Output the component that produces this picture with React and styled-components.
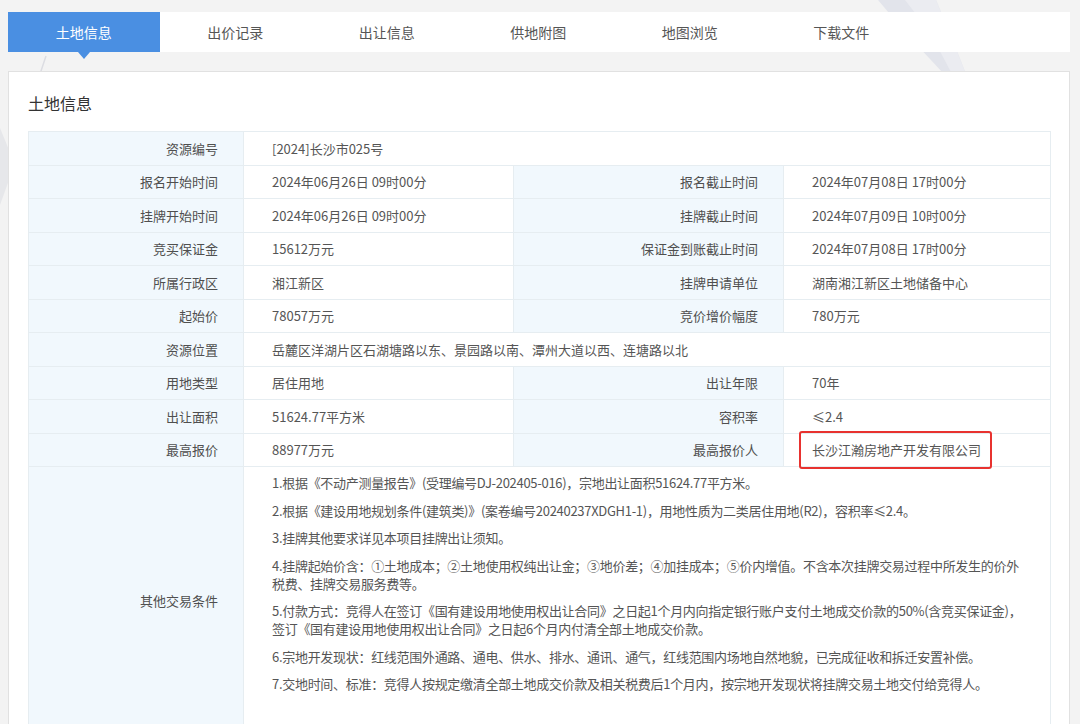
import React from 'react';
import styled, { createGlobalStyle } from 'styled-components';

const GlobalStyle = createGlobalStyle`
  html, body {
    margin: 0;
    background: #f3f3f3;
    font-family: "Noto Sans CJK SC", "Noto Sans", sans-serif;
    font-size: 13px;
    color: #555;
  }
  * { box-sizing: border-box; }
`;

const Page = styled.div`
  position: relative;
  min-height: 724px;
  padding: 12px 10px 0 8px;
  overflow: hidden;
`;

const Backdrop = styled.svg`
  position: absolute;
  left: 0;
  top: 0;
  width: 1080px;
  height: 724px;
  z-index: 0;
`;

const Content = styled.div`
  position: relative;
  z-index: 1;
`;

const TabBar = styled.div`
  display: flex;
  height: 40px;
  background: #fff;
`;

const Tab = styled.div`
  position: relative;
  width: 151.5px;
  display: flex;
  align-items: center;
  justify-content: center;
  font-size: 14px;
  color: ${(p) => (p.$active ? '#fff' : '#555')};
  background: ${(p) => (p.$active ? '#4a8fe2' : 'transparent')};
  cursor: pointer;

  ${(p) =>
    p.$active &&
    `
    &::after {
      content: '';
      position: absolute;
      left: 50%;
      bottom: -7px;
      margin-left: -6px;
      border-left: 6px solid transparent;
      border-right: 6px solid transparent;
      border-top: 7px solid #4a8fe2;
    }
  `}
`;

const Panel = styled.section`
  margin-top: 19px;
  background: #fff;
  border: 1px solid #e1e1e1;
  padding: 20px 19px 0 19px;
`;

const Title = styled.h2`
  margin: 0 0 17px;
  font-size: 16px;
  line-height: 22px;
  font-weight: normal;
  color: #333;
`;

const Table = styled.table`
  width: 1022px;
  table-layout: fixed;
  border-collapse: collapse;
`;

const Label = styled.th`
  height: 33.5px;
  padding: 0 25px 0 10px;
  text-align: right;
  font-weight: normal;
  color: #4f4f4f;
  background: #f1f8fd;
  border: 1px solid #e6edf1;
  white-space: nowrap;
`;

const Value = styled.td`
  height: 33.5px;
  padding: 0 10px 0 28px;
  text-align: left;
  color: #555;
  background: #fff;
  border: 1px solid #e6edf1;
  white-space: nowrap;
`;

const NotesCell = styled.td`
  padding: 7px 20px 32px 28px;
  text-align: left;
  vertical-align: top;
  color: #555;
  background: #fff;
  border: 1px solid #e6edf1;
  letter-spacing: -0.3px;
`;

const Note = styled.p`
  margin: 0 0 9.5px;
  line-height: 18px;
`;

const Marked = styled.span`
  position: relative;
  display: inline-block;
  line-height: 16px;

  &::after {
    content: '';
    position: absolute;
    top: -11px;
    bottom: -11px;
    left: -13px;
    right: -11px;
    border: 2px solid #e8322f;
    border-radius: 3px;
  }
`;

const tabs = ['土地信息', '出价记录', '出让信息', '供地附图', '地图浏览', '下载文件'];

const rows = [
  [['资源编号', '[2024]长沙市025号']],
  [['报名开始时间', '2024年06月26日 09时00分'], ['报名截止时间', '2024年07月08日 17时00分']],
  [['挂牌开始时间', '2024年06月26日 09时00分'], ['挂牌截止时间', '2024年07月09日 10时00分']],
  [['竞买保证金', '15612万元'], ['保证金到账截止时间', '2024年07月08日 17时00分']],
  [['所属行政区', '湘江新区'], ['挂牌申请单位', '湖南湘江新区土地储备中心']],
  [['起始价', '78057万元'], ['竞价增价幅度', '780万元']],
  [['资源位置', '岳麓区洋湖片区石湖塘路以东、景园路以南、潭州大道以西、连塘路以北']],
  [['用地类型', '居住用地'], ['出让年限', '70年']],
  [['出让面积', '51624.77平方米'], ['容积率', '≤2.4']],
  [['最高报价', '88977万元'], ['最高报价人', '长沙江瀚房地产开发有限公司', true]],
];

const notes = [
  '1.根据《不动产测量报告》(受理编号DJ-202405-016)，宗地出让面积51624.77平方米。',
  '2.根据《建设用地规划条件(建筑类)》(案卷编号20240237XDGH1-1)，用地性质为二类居住用地(R2)，容积率≤2.4。',
  '3.挂牌其他要求详见本项目挂牌出让须知。',
  '4.挂牌起始价含：①土地成本；②土地使用权纯出让金；③地价差；④加挂成本；⑤价内增值。不含本次挂牌交易过程中所发生的价外税费、挂牌交易服务费等。',
  '5.付款方式：竞得人在签订《国有建设用地使用权出让合同》之日起1个月内向指定银行账户支付土地成交价款的50%(含竞买保证金)，签订《国有建设用地使用权出让合同》之日起6个月内付清全部土地成交价款。',
  '6.宗地开发现状：红线范围外通路、通电、供水、排水、通讯、通气，红线范围内场地自然地貌，已完成征收和拆迁安置补偿。',
  '7.交地时间、标准：竞得人按规定缴清全部土地成交价款及相关税费后1个月内，按宗地开发现状将挂牌交易土地交付给竞得人。',
];

export default function App() {
  return (
    <Page>
      <GlobalStyle />
      <Backdrop viewBox="0 0 1080 724">
        <path d="M878 0 L936 0 Q952 38 966 74 L944 74 Q908 36 878 0 Z" fill="#e2e4eb" />
        <path d="M905 0 L936 0 Q952 38 966 74 L952 74 Q930 30 905 0 Z" fill="#ebecf1" />
        <path d="M46 56 L40 74" stroke="#dcdde2" strokeWidth="1.5" />
        <path d="M0 128 L9 150 L9 180 L0 205 Z" fill="#e6e7ea" />
      </Backdrop>
      <Content>
        <TabBar>
          {tabs.map((t, i) => (
            <Tab key={t} $active={i === 0}>{t}</Tab>
          ))}
        </TabBar>
        <Panel>
          <Title>土地信息</Title>
          <Table>
            <colgroup>
              <col style={{ width: 215 }} />
              <col style={{ width: 270 }} />
              <col style={{ width: 270 }} />
              <col style={{ width: 267 }} />
            </colgroup>
            <tbody>
              {rows.map((row, i) => (
                <tr key={i}>
                  {row.map(([label, value, marked]) => (
                    <React.Fragment key={label}>
                      <Label>{label}</Label>
                      <Value colSpan={row.length === 1 ? 3 : 1}>
                        {marked ? <Marked>{value}</Marked> : value}
                      </Value>
                    </React.Fragment>
                  ))}
                </tr>
              ))}
              <tr>
                <Label>其他交易条件</Label>
                <NotesCell colSpan={3}>
                  {notes.map((n) => (
                    <Note key={n}>{n}</Note>
                  ))}
                </NotesCell>
              </tr>
            </tbody>
          </Table>
        </Panel>
      </Content>
    </Page>
  );
}
